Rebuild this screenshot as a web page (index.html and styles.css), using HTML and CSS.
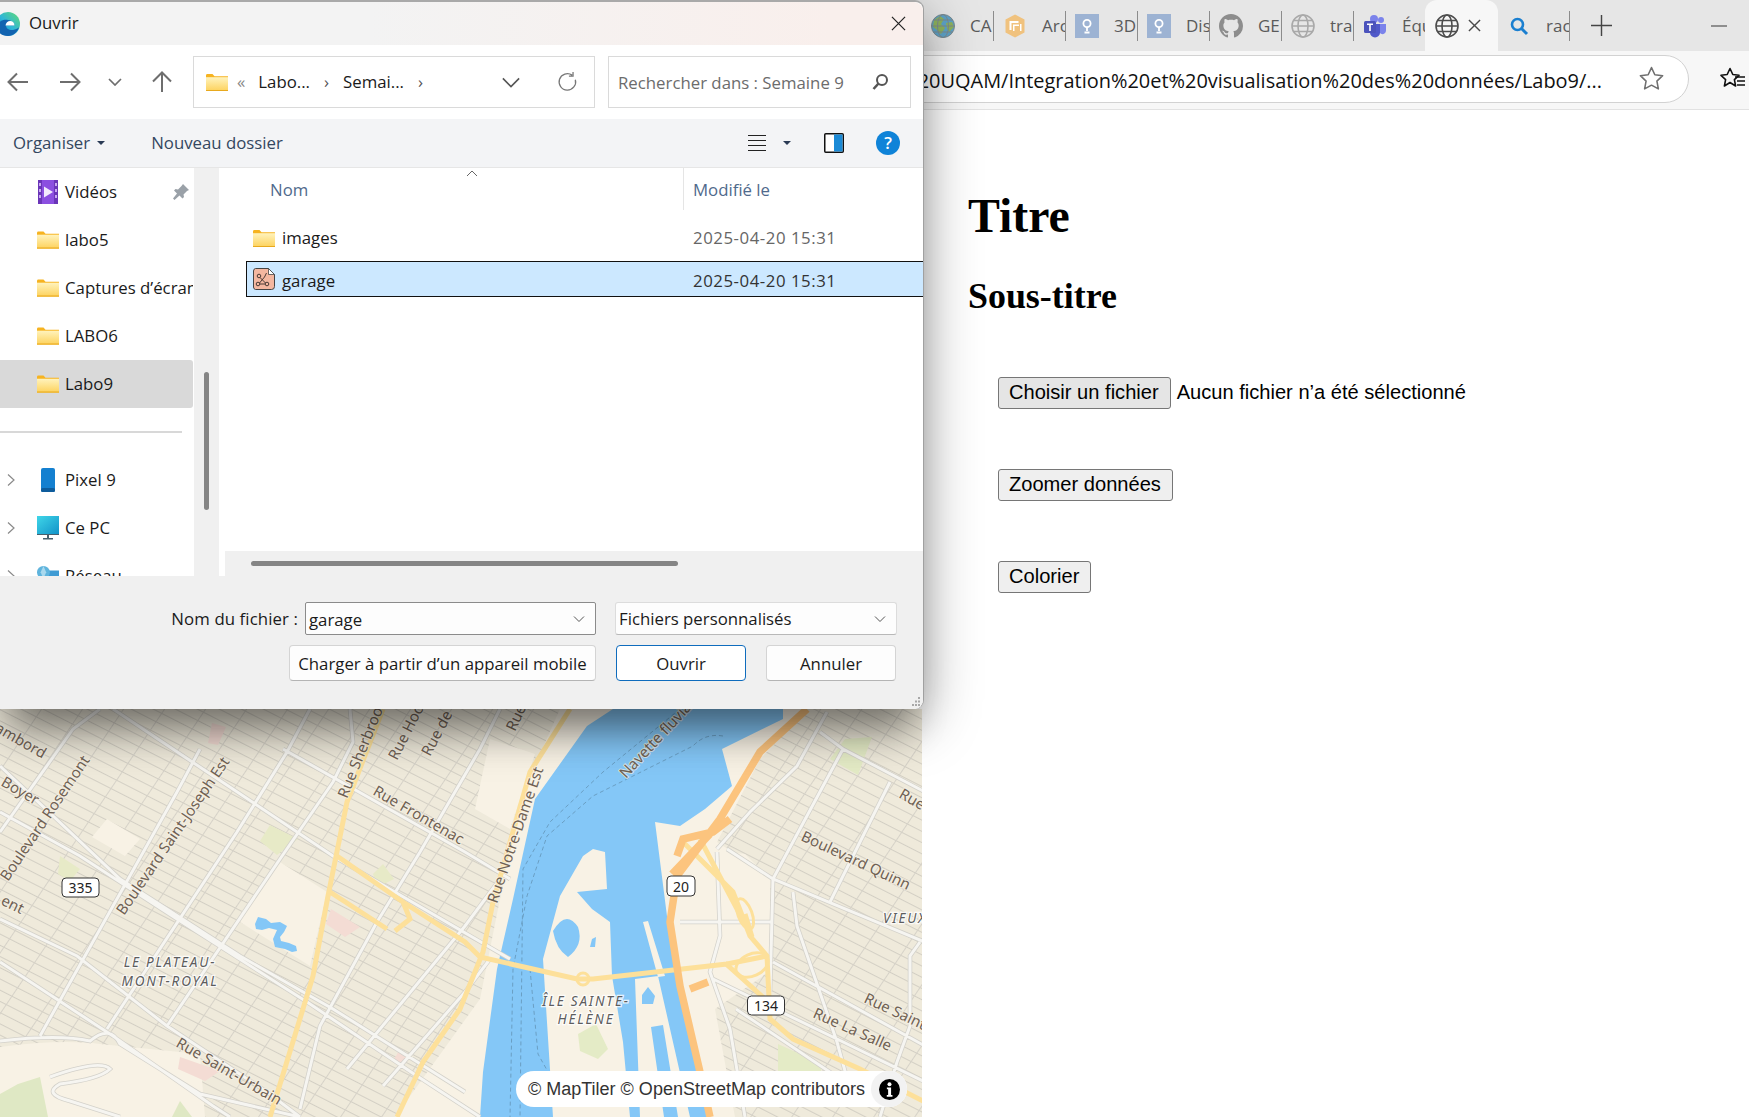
FILE: index.html
```html
<!DOCTYPE html>
<html>
<head>
    <title>Titre</title>
    <link rel="stylesheet" href="styles.css">
</head>
<body>
    <svg class="icon-defs" width="0" height="0">
        <defs>
            <linearGradient id="folderFill" x1="0" y1="0" x2="0" y2="1">
                <stop offset="0" stop-color="#fff3bd"/>
                <stop offset="1" stop-color="#fdd25c"/>
            </linearGradient>
            <linearGradient id="pcFill" x1="0" y1="0" x2="1" y2="1">
                <stop offset="0" stop-color="#3fd6e8"/>
                <stop offset="1" stop-color="#1293c9"/>
            </linearGradient>
            <linearGradient id="edgeFill" x1="0" y1="1" x2="1" y2="0">
                <stop offset="0" stop-color="#1478c8"/>
                <stop offset=".5" stop-color="#2fb6d8"/>
                <stop offset="1" stop-color="#62dc72"/>
            </linearGradient>
            <pattern id="hatch" width="10" height="10" patternUnits="userSpaceOnUse" patternTransform="rotate(27)">
                <rect width="10" height="10" fill="#efeadb"/>
                <rect width="10" height="1" fill="#d3cfc4"/>
            </pattern>
            <pattern id="crossing" width="34" height="34" patternUnits="userSpaceOnUse" patternTransform="rotate(-56)">
                <rect width="34" height="1" fill="#d6d2c8"/>
            </pattern>
            <symbol id="folder" viewBox="0 0 22 17">
                <path d="M0 1.500C0 .7.5 0 1.300 0h5.200l2 2.200H22V17H0z" fill="#f6b321"/>
                <path d="M0 3.200h22V17H0z" fill="url(#folderFill)"/>
                <path d="M0 16h22v1H0z" fill="#e8a91e"/>
            </symbol>
            <symbol id="globe" viewBox="0 0 24 24">
                <g fill="none" stroke="currentColor" stroke-width="1.600">
                    <circle cx="12" cy="12" r="11"/>
                    <ellipse cx="12" cy="12" rx="5" ry="11"/>
                    <path d="M1 12h22M2.600 6.500h18.800M2.600 17.500h18.800"/>
                </g>
            </symbol>
            <symbol id="bulb" viewBox="0 0 24 24">
                <rect width="24" height="24" fill="#9db3d3"/>
                <circle cx="12" cy="9.500" r="3.600" fill="none" stroke="#fff" stroke-width="1.800"/>
                <path d="M12 13v4M9.500 18.500h5" stroke="#fff" stroke-width="1.800" fill="none"/>
            </symbol>
            <symbol id="chev" viewBox="0 0 12 8">
                <path d="M1 1.500l5 5 5-5" fill="none" stroke="currentColor" stroke-width="1"/>
            </symbol>
            <symbol id="expand" viewBox="0 0 8 12">
                <path d="M1 .5L7 6l-6 5.500" fill="none" stroke="#8a8a8a" stroke-width="1.200"/>
            </symbol>
            <path id="roads" d="M113 0L333 147 510 250M0 57L120 170 240 247 333 300 465 383M0 103L80 147 177 210 307 293 417 367 480 408M0 210L77 247 167 317 267 383 300 408M0 253L113 327 213 397 230 408M283 40L465 143 510 170M40 327L177 83 200 40M107 320L237 123 287 43 310 0M167 317L280 150 333 73 353 33 350 0M0 123L73 20 100 0M300 400L320 317 377 213 420 143 480 40 500 0M347 360L465 217 500 170M383 377L465 283 490 250M0 332Q60 325 90 332 110 315 120 335L200 385 300 408M50 368Q100 350 110 360 100 370 60 375 42 385 70 392L120 408M820 23L843 40 925 83M727 140L773 170 925 233M773 253L925 337M713 270L837 330 925 373M843 40L773 170 770 283M890 73L830 193M827 3L797 57 750 103 717 140M793 183L797 217 837 333 850 380M920 233L910 247V317L897 353 880 408M717 143L720 227 710 263 730 320 745 408M680 213H773M736 300L870 390"/>
        </defs>
    </svg>

    <div class="screen">
        <div class="tabstrip">
            <div class="tab">
                <svg class="tab-icon" viewBox="0 0 24 24">
                    <circle cx="12" cy="12" r="11.500" fill="#5da3c9"/>
                    <path d="M3 6l6-4 4 3-3 5 4 4-4 6-5-5-3-2zM15 9l6-1 2 5-5 5-2-4z" fill="#8fb35c"/>
                    <g fill="none" stroke="#7c8a8f" stroke-width="1">
                        <circle cx="12" cy="12" r="11.500"/>
                        <ellipse cx="12" cy="12" rx="5.500" ry="11.500"/>
                        <path d="M.5 12h23M2.500 6h19M2.500 18h19"/>
                    </g>
                </svg>
                <span class="tab-text">CA</span>
            </div>
            <div class="tab">
                <svg class="tab-icon" viewBox="0 0 24 24">
                    <path d="M12 .5l9.500 5v13L12 23.500l-9.500-5v-13z" fill="#f0c27e"/>
                    <path d="M6.500 7h9v2h-7v7h-2zM10 10.500h6V12h-4.500v5H10zM17 10h1.500v7H17z" fill="#fff"/>
                </svg>
                <span class="tab-text">Arc</span>
            </div>
            <div class="tab">
                <svg class="tab-icon"><use href="#bulb"/></svg>
                <span class="tab-text">3D</span>
            </div>
            <div class="tab">
                <svg class="tab-icon"><use href="#bulb"/></svg>
                <span class="tab-text">Dis</span>
            </div>
            <div class="tab">
                <svg class="tab-icon" viewBox="0 0 16 16">
                    <path fill="#8d8d8d" d="M8 0C3.58 0 0 3.58 0 8c0 3.54 2.29 6.53 5.47 7.59.4.07.55-.17.55-.38 0-.19-.01-.82-.01-1.49-2.01.37-2.53-.49-2.69-.94-.09-.23-.48-.94-.82-1.13-.28-.15-.68-.52-.01-.53.63-.01 1.08.58 1.23.82.72 1.21 1.87.87 2.33.66.07-.52.28-.87.51-1.07-1.78-.2-3.64-.89-3.64-3.95 0-.87.31-1.59.82-2.15-.08-.2-.36-1.02.08-2.12 0 0 .67-.21 2.2.82.64-.18 1.32-.27 2-.27s1.36.09 2 .27c1.53-1.04 2.2-.82 2.2-.82.44 1.1.16 1.92.08 2.12.51.56.82 1.27.82 2.15 0 3.07-1.87 3.75-3.65 3.95.29.25.54.73.54 1.48 0 1.07-.01 1.93-.01 2.2 0 .21.15.46.55.38A8.013 8.013 0 0016 8c0-4.42-3.58-8-8-8z"/>
                </svg>
                <span class="tab-text">GE</span>
            </div>
            <div class="tab">
                <svg class="tab-icon globe-light"><use href="#globe"/></svg>
                <span class="tab-text">tra</span>
            </div>
            <div class="tab tab-plain">
                <svg class="tab-icon" viewBox="0 0 24 24">
                    <circle cx="18" cy="6" r="3" fill="#7b83eb"/>
                    <circle cx="11" cy="5" r="4" fill="#7b83eb"/>
                    <path d="M14 10h9v6.500a3.500 3.500 0 01-5 3.300l-4-2.800z" fill="#7b83eb"/>
                    <path d="M7 10h10v8.500a5 5 0 01-10 0z" fill="#5059c9"/>
                    <rect x="1" y="7" width="12" height="12" rx="1.500" fill="#4b53bc"/>
                    <path d="M4 9.500h6v1.500H7.800v6H6.200v-6H4z" fill="#fff"/>
                </svg>
                <span class="tab-text">Équ</span>
            </div>
            <div class="tab tab-active">
                <svg class="tab-icon globe-dark"><use href="#globe"/></svg>
                <svg class="tab-close" viewBox="0 0 14 14"><path d="M1 1l12 12M13 1L1 13" stroke="#4a4a4a" stroke-width="1.500" fill="none"/></svg>
            </div>
            <div class="tab">
                <svg class="tab-icon" viewBox="0 0 24 24">
                    <circle cx="10.500" cy="10.500" r="5.500" fill="none" stroke="#1a7fd0" stroke-width="2.600"/>
                    <path d="M14.500 14.500l5.500 5.500" stroke="#1a7fd0" stroke-width="3" fill="none"/>
                </svg>
                <span class="tab-text">rac</span>
            </div>
            <svg class="tab-plus" viewBox="0 0 22 22"><path d="M11 0v22M0 11h22" stroke="#444" stroke-width="1.500" fill="none"/></svg>
            <div class="tab-min"></div>
        </div>

        <div class="toolbar">
            <div class="urlbar">
                <span class="url-text">%20UQAM/Integration%20et%20visualisation%20des%20données/Labo9/...</span>
                <svg class="url-star" viewBox="0 0 24 24"><path d="M12 1.500l3.200 6.900 7.500.9-5.500 5.200 1.400 7.500L12 18.400l-6.600 3.600 1.400-7.500L1.300 9.300l7.500-.9z" fill="none" stroke="#707070" stroke-width="1.500" stroke-linejoin="round"/></svg>
            </div>
            <svg class="fav-icon" viewBox="0 0 26 24">
                <path d="M10 1.500l2.800 6 6.200.8-4.600 4.300 1.200 6.400L10 15.500l-5.600 3.500 1.200-6.400L1 8.300l6.200-.8z" fill="none" stroke="#111" stroke-width="1.600" stroke-linejoin="round"/>
                <path d="M15 10h10M17 14h8M17 18h8" stroke="#111" stroke-width="1.500" fill="none"/>
            </svg>
        </div>

        <div class="page">
            <div class="map-pane">
                <svg class="map" viewBox="0 0 922 408">
                    <rect width="922" height="408" fill="#f8f2e5"/>

                    <!-- quartiers -->
                    <path d="M0 0H560L520 90 480 290 395 408H0z" fill="url(#hatch)"/>
                    <path d="M0 0H560L520 90 480 290 395 408H0z" fill="url(#crossing)"/>
                    <path d="M808 0H922V408H735L715 300 770 262V167L717 133 760 50z" fill="url(#hatch)"/>
                    <path d="M808 0H922V408H735L715 300 770 262V167L717 133 760 50z" fill="url(#crossing)"/>
                    <path d="M240 213L280 153 327 183 310 257z M107 110L140 130 125 147 92 128z M0 338Q60 330 100 335L200 345 205 408H0z M490 30L535 45 510 120 475 100z" fill="#f8f2e5"/>
                    <path d="M745 145L770 170V262L715 290 690 300 680 200 700 140z" fill="#f8f2e5"/>

                    <!-- parcs -->
                    <path d="M270 116L298 130 277 146 260 132zM60 147L80 160 70 172 58 165zM383 155L394 170 378 178 373 165z" fill="#e7eac7"/>
                    <path d="M0 408V385L18 375 40 368 48 408zM172 408L180 392 192 408z" fill="#dfe8c4"/>
                    <path d="M778 335L822 355 818 380 778 365zM845 30L872 28 858 66 830 50z" fill="#e4ebc6"/>
                    <path d="M212 14L226 18 218 36 208 34zM331 200L360 218 345 228 326 215zM180 348L220 362 205 372 178 360zM400 340L410 348 400 358 393 352z" fill="#f4dcd4"/>

                    <!-- fleuve -->
                    <path d="M613 0L587 17 535 90 513 190 497 260 483 363 480 408H708L690 320 668 215 655 113 680 117 705 100 732 77 722 40 783 10 783 0z" fill="#84c7f7"/>
                    <path d="M593 140L605 143 607 180 577 183 592 200 610 213 612 267 623 333 630 408H553L543 250 560 187 583 147z" fill="#f8f2e5"/>
                    <path d="M553 222Q566 200 578 218 584 236 568 248 556 240 553 222z M592 230L596 228 595 238 590 238z" fill="#84c7f7"/>
                    <path d="M635 270L658 267 690 408H640z M643 213L648 212 665 267 658 268z" fill="#f8f2e5"/>
                    <path d="M642 286L648 278 655 287 653 295 642 295zM651 318L663 316 678 408H664z" fill="#84c7f7"/>
                    <path d="M578 325L596 315 608 340 598 350 580 342z" fill="#e4ebc6"/>
                    <path d="M258 208l8 2 5 4 9-1 7 4-3 6-4 5 1 4 8 2 7 3 1 5-5 1-7-3-10-2-2-8 4-9-8-2-7 2-6-1-1-5z" fill="#84c7f7"/>
                    <g class="ferry">
                        <path d="M723 27Q705 24 693 37L593 87 547 127 527 187 513 260 510 408"/>
                        <path d="M680 0L603 63 550 113 523 160 520 408"/>
                        <path d="M530 260L538 345 552 370"/>
                    </g>

                    <!-- rues -->
                    <use href="#roads" class="road-casing"/>
                    <use href="#roads" class="road-fill"/>

                    <!-- autoroutes -->
                    <g class="highway">
                        <path d="M383 0L347 93 328 187 313 267 270 408M337 147L403 193 465 233 480 248 577 270 593 270 727 255 767 247M330 183L387 220M403 193L410 210 395 222M570 0L530 63 493 193 483 243 460 300 423 353 397 408"/>
                        <path d="M683 133L733 183 750 227 767 247 770 310 793 330 860 360 925 393M745 205L752 228M700 130L745 215M725 254L765 290"/>
                        <ellipse class="ramp" cx="752" cy="256" rx="17" ry="11" transform="rotate(-25 752 256)"/>
                        <ellipse class="ramp" cx="745" cy="205" rx="7" ry="16" transform="rotate(-20 745 205)"/>
                        <circle cx="583" cy="270" r="6"/>
                    </g>
                    <g class="freeway">
                        <path d="M807 0L760 43 720 110 677 167 670 213 680 277 700 363 710 408M677 147L683 130 713 123 730 110M690 280L708 273M710 125L672 165"/>
                    </g>

                    <!-- libellés -->
                    <g class="map-label">
                        <text transform="translate(-6 22) rotate(30)">ambord</text>
                        <text transform="translate(0 76) rotate(30)">Boyer</text>
                        <text transform="translate(0 195) rotate(26)">ent</text>
                        <text transform="translate(8 173) rotate(-56)">Boulevard Rosemont</text>
                        <text transform="translate(124 207) rotate(-55.500)">Boulevard Saint-Joseph Est</text>
                        <text transform="translate(347 90) rotate(-68)">Rue Sherbrooke</text>
                        <text transform="translate(397 52) rotate(-63)">Rue Hoc</text>
                        <text transform="translate(430 48) rotate(-62)">Rue de</text>
                        <text transform="translate(372 85) rotate(30)">Rue Frontenac</text>
                        <text transform="translate(175 337) rotate(30)">Rue Saint-Urbain</text>
                        <text transform="translate(515 23) rotate(-65)">Rue</text>
                        <text transform="translate(626 70) rotate(-47)">Navette fluviale</text>
                        <text transform="translate(497 195) rotate(-71)">Rue Notre-Dame Est</text>
                        <text transform="translate(800 131) rotate(25)">Boulevard Quinn</text>
                        <text transform="translate(898 88) rotate(30)">Rue</text>
                        <text transform="translate(863 293) rotate(25)">Rue Saint</text>
                        <text transform="translate(812 308) rotate(24)">Rue La Salle</text>
                    </g>
                    <g class="map-area">
                        <text x="170" y="258">LE PLATEAU-</text>
                        <text x="170" y="277">MONT-ROYAL</text>
                        <text x="586" y="297">ÎLE SAINTE-</text>
                        <text x="586" y="315">HÉLÈNE</text>
                        <text x="905" y="214">VIEUX</text>
                    </g>
                    <g class="shield">
                        <rect x="62" y="169" width="37" height="19" rx="4"/>
                        <rect x="667" y="167" width="28" height="20" rx="4"/>
                        <rect x="747.500" y="287" width="37" height="19" rx="4"/>
                    </g>
                    <g class="shield-text">
                        <text x="80.500" y="184">335</text>
                        <text x="681" y="183">20</text>
                        <text x="766" y="302">134</text>
                    </g>
                </svg>
                <div class="attrib">
                    <span class="attrib-text">© MapTiler © OpenStreetMap contributors</span>
                    <span class="attrib-btn">
                        <svg class="attrib-i" viewBox="0 0 20 20">
                            <circle cx="10" cy="10" r="10" fill="#000"/>
                            <circle cx="10" cy="5" r="1.900" fill="#fff"/>
                            <path d="M7.500 8.200h4v7h1.300v1.600H7.400v-1.600h1.300V9.800H7.500z" fill="#fff"/>
                        </svg>
                    </span>
                </div>
            </div>

            <div class="side">
                <h1>Titre</h1>
                <h2>Sous-titre</h2>
                <div class="controls">
                    <div class="control">
                        <button class="btn btn-file">Choisir un fichier</button>
                        <span class="no-file">Aucun fichier n’a été sélectionné</span>
                    </div>
                    <div class="control"><button class="btn">Zoomer données</button></div>
                    <div class="control"><button class="btn">Colorier</button></div>
                </div>
            </div>
        </div>

        <div class="dialog">
            <div class="dlg-title">
                <svg class="edge-icon" viewBox="0 0 24 24">
                    <circle cx="12" cy="12" r="12" fill="url(#edgeFill)"/>
                    <path d="M1 15.500C1.500 9.500 7 7 12 8c4 .8 6.500 3 6.500 5.500H10c0 3 3 5 7 4.500 2.500-.3 4.500-1.300 6-2.700C21.500 20.500 17 24 12 24 6 24 1.500 20.500 1 15.500z" fill="#1263b0"/>
                    <path d="M9.500 13.500c.3-2.700 2.200-4.500 4.800-4.500 2.400 0 4.200 2 4.200 4.500z" fill="#fff"/>
                </svg>
                <span class="dlg-name">Ouvrir</span>
                <svg class="dlg-close" viewBox="0 0 16 16"><path d="M1 1l14 14M15 1L1 15" stroke="#222" stroke-width="1.300" fill="none"/></svg>
            </div>

            <div class="dlg-nav">
                <svg class="nav-arrow nav-back" viewBox="0 0 24 24"><path d="M22 12H3M11 3.500L2.500 12l8.500 8.500" fill="none" stroke="#6e6e6e" stroke-width="2"/></svg>
                <svg class="nav-arrow nav-forward" viewBox="0 0 24 24"><path d="M2 12h19M13 3.500l8.500 8.500-8.500 8.500" fill="none" stroke="#6e6e6e" stroke-width="2"/></svg>
                <svg class="nav-down" viewBox="0 0 14 8"><path d="M1 1l6 6 6-6" fill="none" stroke="#6e6e6e" stroke-width="1.700"/></svg>
                <svg class="nav-arrow nav-up" viewBox="0 0 24 24"><path d="M12 22V3M3 11.500L12 2.500l9 9" fill="none" stroke="#6e6e6e" stroke-width="2"/></svg>
                <div class="addr-box">
                    <svg class="folder-icon"><use href="#folder"/></svg>
                    <span class="crumb-sep crumb-more">«</span>
                    <span class="crumb">Labo...</span>
                    <span class="crumb-sep">›</span>
                    <span class="crumb">Semai...</span>
                    <span class="crumb-sep">›</span>
                    <svg class="addr-chev"><use href="#chev"/></svg>
                    <svg class="addr-refresh" viewBox="0 0 24 24"><path d="M16.500 4.500A9 9 0 1020 9.500M17.500 1v4.500H13" fill="none" stroke="#777" stroke-width="1.400"/></svg>
                </div>
                <div class="search-box">
                    <span class="search-text">Rechercher dans : Semaine 9</span>
                    <svg class="search-icon" viewBox="0 0 18 18"><circle cx="11" cy="7" r="5" fill="none" stroke="#555" stroke-width="2"/><path d="M7.500 10.500L2.500 16" stroke="#555" stroke-width="2.600" fill="none"/></svg>
                </div>
            </div>

            <div class="dlg-tools">
                <span class="tool-item">Organiser</span>
                <span class="caret"></span>
                <span class="tool-item tool-new">Nouveau dossier</span>
                <span class="tool-right">
                    <svg class="view-icon" viewBox="0 0 18 18"><path d="M0 1.500h18M0 6.500h18M0 11.500h18M0 16.500h18" stroke="#222" stroke-width="1"/></svg>
                    <span class="caret caret-view"></span>
                    <svg class="pane-icon" viewBox="0 0 20 20"><rect x=".75" y=".75" width="18.500" height="18.500" rx="1" fill="#fff" stroke="#111" stroke-width="1.500"/><rect x="10" y="1.500" width="8.500" height="17" fill="#1b8ad6"/></svg>
                    <svg class="help-icon" viewBox="0 0 24 24"><circle cx="12" cy="12" r="12" fill="#0f83d8"/><text class="help-mark" x="12" y="18">?</text></svg>
                </span>
            </div>

            <div class="dlg-body">
                <div class="nav-pane">
                    <div class="nav-row">
                        <span class="nav-exp"></span>
                        <svg class="nav-icon" viewBox="0 0 20 24"><rect width="20" height="24" rx="2" fill="#8b4fe0"/><path d="M0 0h4v24H0zM16 0h4v24h-4z" fill="#6a35b8"/><path d="M1 3h2v3H1zM1 9h2v3H1zM1 15h2v3H1zM17 3h2v3h-2zM17 9h2v3h-2zM17 15h2v3h-2z" fill="#c9a8f3"/><path d="M6 6.500l9 5.500-9 5.500z" fill="#f2eafd"/></svg>
                        <span class="nav-label">Vidéos</span>
                        <svg class="pin" viewBox="0 0 16 16"><path d="M10 0l6 6-2 1-3.500 3.500.5 2.500-1.500 1.500-3-3L1.500 16 0 14.500 4 9.500l-3-3L2.500 5 5 5.500 8.500 2z" fill="#9aa1a8"/></svg>
                    </div>
                    <div class="nav-row"><span class="nav-exp"></span><svg class="nav-icon"><use href="#folder"/></svg><span class="nav-label">labo5</span></div>
                    <div class="nav-row"><span class="nav-exp"></span><svg class="nav-icon"><use href="#folder"/></svg><span class="nav-label">Captures d’écran</span></div>
                    <div class="nav-row"><span class="nav-exp"></span><svg class="nav-icon"><use href="#folder"/></svg><span class="nav-label">LABO6</span></div>
                    <div class="nav-row nav-current"><span class="nav-exp"></span><svg class="nav-icon"><use href="#folder"/></svg><span class="nav-label">Labo9</span></div>
                    <div class="nav-gap"><hr class="nav-line"></div>
                    <div class="nav-row">
                        <span class="nav-exp"><svg class="exp-icon"><use href="#expand"/></svg></span>
                        <svg class="nav-icon" viewBox="0 0 22 24"><rect x="4" width="14" height="24" rx="2" fill="#1480d0"/><rect x="4" y="20" width="14" height="4" rx="1.500" fill="#0e5c9c"/></svg>
                        <span class="nav-label">Pixel 9</span>
                    </div>
                    <div class="nav-row">
                        <span class="nav-exp"><svg class="exp-icon"><use href="#expand"/></svg></span>
                        <svg class="nav-icon" viewBox="0 0 22 24"><rect width="22" height="18" fill="url(#pcFill)"/><path d="M0 18h22v1H0zM10 19h2v3h-2zM6 22h10v1.500H6z" fill="#47606e"/></svg>
                        <span class="nav-label">Ce PC</span>
                    </div>
                    <div class="nav-row">
                        <span class="nav-exp"><svg class="exp-icon"><use href="#expand"/></svg></span>
                        <svg class="nav-icon" viewBox="0 0 24 24"><rect x="6" y="6" width="18" height="14" fill="#3f9bd4"/><circle cx="7" cy="8" r="7" fill="#5fb4dd"/><path d="M7 1l3 7-3 7-3-7z" fill="#a9d9ee"/></svg>
                        <span class="nav-label">Réseau</span>
                    </div>
                </div>
                <div class="nav-track"><div class="nav-thumb"></div></div>

                <div class="file-pane">
                    <div class="file-head">
                        <span class="col-name">Nom</span>
                        <span class="col-date">Modifié le</span>
                        <svg class="sort-mark" viewBox="0 0 12 7"><path d="M1 6l5-5 5 5" fill="none" stroke="#666" stroke-width="1"/></svg>
                    </div>
                    <div class="file-list">
                        <div class="file-row">
                            <svg class="file-icon"><use href="#folder"/></svg>
                            <span class="file-name">images</span>
                            <span class="file-date">2025-04-20 15:31</span>
                        </div>
                        <div class="file-row file-selected">
                            <svg class="file-icon file-icon-doc" viewBox="0 0 22 22">
                                <path d="M2.500.5h13l6 6v12a3 3 0 01-3 3h-16a2.500 2.500 0 01-2-2.500V3a2.500 2.500 0 012-2.500z" fill="#f4b7a0" stroke="#444" stroke-width="1"/>
                                <path d="M15.500.5l6 6h-6z" fill="#fff" stroke="#444" stroke-width=".8"/>
                                <g fill="none" stroke="#4a3a34" stroke-width="1">
                                    <circle cx="6" cy="8" r="1.800"/><circle cx="5" cy="16" r="1.800"/><circle cx="14" cy="16" r="1.800"/>
                                    <path d="M7 9.500l5.500 5.500M6.500 15l5-6 2-4M7 16h5"/>
                                </g>
                            </svg>
                            <span class="file-name">garage</span>
                            <span class="file-date">2025-04-20 15:31</span>
                        </div>
                    </div>
                    <div class="hbar"><div class="hbar-thumb"></div></div>
                </div>
            </div>

            <div class="dlg-foot">
                <div class="foot-row">
                    <label class="foot-label">Nom du fichier :</label>
                    <div class="name-input">
                        <span class="name-value">garage</span>
                        <svg class="small-chev"><use href="#chev"/></svg>
                    </div>
                    <div class="type-select">
                        <span>Fichiers personnalisés</span>
                        <svg class="small-chev"><use href="#chev"/></svg>
                    </div>
                </div>
                <div class="foot-row foot-buttons">
                    <button class="dlg-btn dlg-btn-mobile">Charger à partir d’un appareil mobile</button>
                    <button class="dlg-btn dlg-btn-main">Ouvrir</button>
                    <button class="dlg-btn">Annuler</button>
                </div>
                <svg class="grip" viewBox="0 0 10 10"><path d="M7 0h2v2H7zM4 3.500h2v2H4zM7 3.500h2v2H7zM1 7h2v2H1zM4 7h2v2H4zM7 7h2v2H7z" fill="#a8a8a8"/></svg>
            </div>
        </div>
    </div>
</body>
</html>
```

FILE: styles.css
```css
* {
    box-sizing: border-box;
}

html, body {
    margin: 0;
    padding: 0;
}

.icon-defs {
    position: absolute;
}

.screen {
    position: relative;
    width: 1749px;
    height: 1117px;
    overflow: hidden;
    background: #fff;
    font-family: "Open Sans", "Noto Sans", sans-serif;
}

/* onglets */
.tabstrip {
    display: flex;
    align-items: center;
    height: 51px;
    padding-left: 922px;
    background: #e6e6e6;
}

.tab {
    display: flex;
    align-items: center;
    flex: none;
    width: 72px;
    height: 30px;
    padding-left: 9px;
    border-right: 1.5px solid #8c8c8c;
    overflow: hidden;
}

.tab-plain {
    width: 71px;
    border-right: none;
}

.tab-active {
    height: 51px;
    width: 73px;
    padding-left: 10px;
    background: #f7f7f7;
    border-right: none;
    border-radius: 12px 12px 0 0;
}

.tab-icon {
    flex: none;
    width: 24px;
    height: 24px;
}

.globe-light {
    color: #a9a9a9;
}

.globe-dark {
    color: #4d4d4d;
}

.tab-text {
    margin-left: 15px;
    font-size: 17px;
    color: #5a5a5a;
    white-space: nowrap;
}

.tab-close {
    width: 13px;
    height: 13px;
    margin-left: 9px;
}

.tab-plus {
    width: 21px;
    height: 21px;
    margin-left: 21px;
}

.tab-min {
    width: 16px;
    height: 2px;
    margin-left: 99px;
    background: #8e8e8e;
}

.toolbar {
    display: flex;
    align-items: center;
    height: 59px;
    padding-bottom: 3px;
    background: #f7f7f7;
    border-bottom: 1px solid #e2e2e2;
}

.urlbar {
    display: flex;
    align-items: center;
    justify-content: flex-end;
    width: 1689px;
    height: 48px;
    padding-right: 24px;
    background: #fff;
    border: 1.5px solid #d2d2d2;
    border-radius: 24px;
    overflow: hidden;
}

.url-text {
    flex: none;
    padding-top: 3px;
    font-size: 19.950px;
    color: #111;
    white-space: nowrap;
}

.url-star {
    flex: none;
    width: 25px;
    height: 25px;
    margin-left: 37px;
}

.fav-icon {
    width: 26px;
    height: 24px;
    margin-left: 31px;
}

/* page */
.page {
    display: flex;
    height: 1007px;
}

.map-pane {
    position: relative;
    display: flex;
    align-items: flex-end;
    flex: none;
    width: 922px;
}

.map {
    display: block;
    width: 922px;
    height: 408px;
}

.road-casing {
    fill: none;
    stroke: #d3d1ca;
    stroke-width: 4.5;
}

.road-fill {
    fill: none;
    stroke: #f6f5f1;
    stroke-width: 3;
}

.highway path, .highway circle, .highway .ramp {
    fill: none;
    stroke: #fde09a;
    stroke-width: 5;
}

.highway circle, .highway .ramp {
    stroke-width: 3;
}

.freeway path {
    fill: none;
    stroke: #fcc47e;
    stroke-width: 7.500;
}

.ferry path {
    fill: none;
    stroke: #6a9fc4;
    stroke-width: 1;
    stroke-dasharray: 4 3;
}

.map-label text {
    font-family: "Noto Sans", sans-serif;
    font-size: 15px;
    fill: #6f6154;
    stroke: #f8f2e5;
    stroke-width: 2;
    stroke-opacity: .7;
    paint-order: stroke;
}

.map-area text {
    font-family: "Noto Sans", sans-serif;
    font-size: 13.500px;
    font-style: italic;
    letter-spacing: 1.800px;
    text-anchor: middle;
    fill: #5d5d5d;
    stroke: #fff;
    stroke-width: 2.500;
    stroke-opacity: .8;
    paint-order: stroke;
}

.shield rect {
    fill: #fff;
    stroke: #333;
    stroke-width: 1;
}

.shield-text text {
    font-family: "Noto Sans", sans-serif;
    font-size: 14px;
    text-anchor: middle;
    fill: #222;
}

.attrib {
    position: absolute;
    left: 516px;
    bottom: 10px;
    display: flex;
    align-items: center;
    width: 391px;
    height: 36px;
    padding-left: 12px;
    background: #fff;
    border-radius: 18px;
}

.attrib-text {
    font-family: "Liberation Sans", sans-serif;
    font-size: 18px;
    color: #333;
    white-space: nowrap;
}

.attrib-btn {
    position: absolute;
    right: 0;
    top: 0;
    display: flex;
    align-items: center;
    justify-content: center;
    width: 36px;
    height: 36px;
    background: #f2f2f2;
    border-radius: 50%;
}

.attrib-i {
    width: 21px;
    height: 21px;
}

.side {
    flex: 1;
    padding-left: 46px;
    color: #000;
}

.side h1 {
    margin: 79px 0 0;
    font-family: "Liberation Serif", serif;
    font-size: 47.800px;
    line-height: 54px;
}

.side h2 {
    margin: 33px 0 0;
    font-family: "Liberation Serif", serif;
    font-size: 35.900px;
    line-height: 40px;
}

.controls {
    display: flex;
    flex-direction: column;
    gap: 60px;
    margin-top: 61px;
    padding-left: 30px;
}

.control {
    display: flex;
    align-items: center;
    height: 32px;
    font-family: "Liberation Sans", sans-serif;
    font-size: 20.100px;
}

.btn {
    height: 32px;
    padding: 0 11px 2px 10px;
    font-family: "Liberation Sans", sans-serif;
    font-size: 20.100px;
    color: #000;
    background: #efefef;
    border: 1px solid #767676;
    border-radius: 3px;
}

.btn-file {
    background: #e5e5e5;
}

.no-file {
    margin-left: 6px;
    padding-bottom: 2px;
}

/* dialogue */
.dialog {
    position: absolute;
    left: 0;
    top: 0;
    display: flex;
    flex-direction: column;
    width: 924px;
    height: 709px;
    background: #fff;
    border-top: 2px solid #a9a9a9;
    border-right: 1px solid #a0a0a0;
    border-radius: 0 9px 9px 0;
    box-shadow: 0 12px 55px rgba(0, 0, 0, .38), 0 34px 34px -14px rgba(0, 0, 0, .32);
    color: #1a1a1a;
    font-size: 16.800px;
}

.dlg-title {
    display: flex;
    align-items: center;
    flex: none;
    height: 43px;
    background: linear-gradient(90deg, #f3f3f3 40%, #f9efec 90%);
    border-radius: 0 9px 0 0;
}

.edge-icon {
    width: 24px;
    height: 24px;
    margin-left: -4px;
}

.dlg-name {
    margin-left: 9px;
    margin-top: -2px;
}

.dlg-close {
    width: 15px;
    height: 15px;
    margin-left: auto;
    margin-right: 17px;
}

.dlg-nav {
    display: flex;
    align-items: center;
    flex: none;
    height: 74px;
}

.nav-arrow {
    width: 24px;
    height: 24px;
}

.nav-back {
    margin-left: 6px;
}

.nav-forward {
    margin-left: 28px;
}

.nav-down {
    width: 14px;
    height: 8px;
    margin-left: 26px;
}

.nav-up {
    margin-left: 28px;
}

.addr-box {
    display: flex;
    align-items: center;
    width: 402px;
    height: 52px;
    margin-left: 19px;
    padding-left: 12px;
    border: 1px solid #dadada;
}

.folder-icon {
    width: 22px;
    height: 17px;
}

.crumb {
    margin-top: -2px;
    white-space: nowrap;
}

.crumb-sep {
    margin: -2px 14px 0;
    color: #555;
}

.crumb-more {
    margin: -2px 13px 0 9px;
    color: #888;
}

.addr-chev {
    width: 20px;
    height: 13px;
    margin-left: auto;
    color: #555;
}

.addr-refresh {
    width: 22px;
    height: 22px;
    margin: 0 15px 0 36px;
}

.search-box {
    display: flex;
    align-items: center;
    justify-content: space-between;
    width: 303px;
    height: 52px;
    margin-left: 13px;
    padding: 0 21px 0 9px;
    border: 1px solid #dadada;
}

.search-text {
    color: #6c6c6c;
    white-space: nowrap;
}

.search-icon {
    width: 18px;
    height: 18px;
}

.dlg-tools {
    display: flex;
    align-items: center;
    flex: none;
    height: 49px;
    padding-left: 13px;
    background: #f3f4f6;
    border-bottom: 1px solid #e6e6e6;
}

.tool-item {
    margin-top: -2px;
    color: #34475f;
}

.tool-new {
    margin-left: 46px;
}

.caret {
    width: 0;
    height: 0;
    margin-left: 7px;
    border-left: 4px solid transparent;
    border-right: 4px solid transparent;
    border-top: 4px solid #2a3b55;
}

.tool-right {
    display: flex;
    align-items: center;
    margin-left: auto;
    padding-right: 23px;
}

.view-icon {
    width: 18px;
    height: 18px;
}

.caret-view {
    margin-left: 17px;
}

.pane-icon {
    width: 20px;
    height: 20px;
    margin-left: 33px;
}

.help-icon {
    width: 24px;
    height: 24px;
    margin-left: 32px;
}

.help-mark {
    font-size: 17px;
    font-weight: 600;
    text-anchor: middle;
    fill: #fff;
}

.dlg-body {
    display: flex;
    flex: none;
    height: 408px;
}

.nav-pane {
    flex: none;
    width: 194px;
    overflow: hidden;
}

.nav-row {
    display: flex;
    align-items: center;
    width: 193px;
    height: 48px;
    padding-right: 4px;
    white-space: nowrap;
    overflow: hidden;
}

.nav-current {
    background: #d9d9d9;
    border-radius: 0 3px 3px 0;
}

.nav-exp {
    display: flex;
    align-items: center;
    flex: none;
    width: 37px;
    padding-left: 7px;
}

.exp-icon {
    width: 8px;
    height: 12px;
}

.nav-icon {
    flex: none;
    width: 22px;
    height: 24px;
}

.nav-label {
    margin-left: 6px;
    margin-top: -2px;
}

.pin {
    flex: none;
    width: 16px;
    height: 16px;
    margin-left: auto;
}

.nav-gap {
    display: flex;
    align-items: center;
    height: 48px;
}

.nav-line {
    width: 182px;
    height: 2px;
    margin: 0;
    border: none;
    background: #d8d8d8;
}

.nav-track {
    flex: none;
    width: 25px;
    padding: 204px 0 0 10px;
    background: #f0f0f0;
}

.nav-thumb {
    width: 5px;
    height: 138px;
    background: #858585;
    border-radius: 3px;
}

.file-pane {
    position: relative;
    display: flex;
    flex-direction: column;
    flex: 1;
}

.file-head {
    display: flex;
    flex: none;
    height: 42px;
    color: #4f6a8c;
}

.col-name {
    width: 465px;
    padding: 10px 0 0 51px;
    border-right: 1px solid #e5e5e5;
}

.col-date {
    padding: 10px 0 0 9px;
}

.sort-mark {
    position: absolute;
    left: 247px;
    top: 2px;
    width: 12px;
    height: 7px;
}

.file-list {
    display: flex;
    flex-direction: column;
    flex: 1;
    gap: 5px;
    padding: 10px 0 0 27px;
}

.file-row {
    display: flex;
    align-items: center;
    height: 36px;
    padding-left: 7px;
}

.file-selected {
    background: #cce8ff;
    border: 1px solid #111;
    border-right: none;
    padding-left: 6px;
}

.file-icon {
    flex: none;
    width: 22px;
    height: 17px;
}

.file-icon-doc {
    height: 22px;
}

.file-name, .file-date {
    margin-top: -2px;
}

.file-selected .file-name, .file-selected .file-date {
    margin-top: 0;
    padding-top: 3px;
}

.file-name {
    width: 411px;
    margin-left: 7px;
}

.file-date {
    letter-spacing: .55px;
    color: #666;
}

.file-selected .file-date {
    color: #333;
}

.hbar {
    flex: none;
    height: 25px;
    margin-left: 6px;
    padding: 10px 0 0 26px;
    background: #f0f0f0;
}

.hbar-thumb {
    width: 427px;
    height: 5px;
    background: #858585;
    border-radius: 3px;
}

.dlg-foot {
    position: relative;
    flex: 1;
    padding: 26px 26px 0 0;
    background: #f0f0f0;
    border-radius: 0 0 9px 0;
}

.foot-row {
    display: flex;
    align-items: center;
    justify-content: flex-end;
}

.foot-label {
    margin-right: 7px;
    letter-spacing: .1px;
}

.name-input, .type-select {
    display: flex;
    align-items: center;
    justify-content: space-between;
    height: 33px;
    padding: 0 10px 0 3px;
    background: #fdfdfd;
}

.name-input {
    width: 291px;
    border: 1px solid #8b8b8b;
    border-radius: 2px;
}

.name-value {
    padding-top: 2px;
}

.type-select {
    width: 282px;
    margin-left: 19px;
    border: 1px solid #dcdcdc;
    border-bottom-color: #b8b8b8;
    border-radius: 3px;
}

.small-chev {
    width: 12px;
    height: 8px;
    color: #555;
}

.foot-buttons {
    margin-top: 10px;
    margin-right: 1px;
}

.dlg-btn {
    width: 130px;
    height: 36px;
    margin-left: 20px;
    padding: 0;
    font-family: "Open Sans", "Noto Sans", sans-serif;
    font-size: 16.800px;
    color: #1a1a1a;
    background: #fdfdfd;
    border: 1px solid #d4d4d4;
    border-bottom-color: #b4b4b4;
    border-radius: 4px;
}

.dlg-btn-mobile {
    width: 307px;
    white-space: nowrap;
}

.dlg-btn-main {
    border: 1.500px solid #0f6cbd;
    background: #fff;
}

.grip {
    position: absolute;
    right: 2px;
    bottom: 2px;
    width: 10px;
    height: 10px;
}
```
